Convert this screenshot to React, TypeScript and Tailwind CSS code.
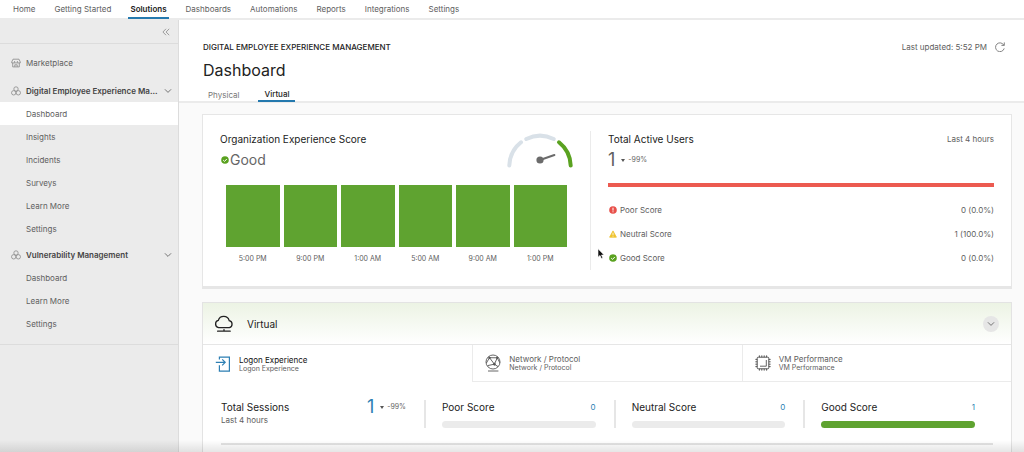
import { ReactNode } from 'react';
import clsx from 'clsx';

const NAV = ['Home', 'Getting Started', 'Solutions', 'Dashboards', 'Automations', 'Reports', 'Integrations', 'Settings'];

const DEEM_LINKS = ['Dashboard', 'Insights', 'Incidents', 'Surveys', 'Learn More', 'Settings'];
const VULN_LINKS = ['Dashboard', 'Learn More', 'Settings'];

const HOURS = ['5:00 PM', '9:00 PM', '1:00 AM', '5:00 AM', '9:00 AM', '1:00 PM'];

function Chevron({ className }: { className?: string }) {
  return (
    <svg viewBox="0 0 8 8" className={className} fill="none" stroke="#666" strokeWidth=".9" strokeLinecap="round" strokeLinejoin="round">
      <path d="M1.2 2.6 4 5.4l2.8-2.8" />
    </svg>
  );
}

function GoodIcon() {
  return (
    <svg viewBox="0 0 8 8" className="size-2 shrink-0">
      <circle cx="4" cy="4" r="3.8" fill="#5aa220" />
      <path d="m2.2 4.1 1.3 1.3 2.3-2.4" fill="none" stroke="#fff" strokeWidth="1" />
    </svg>
  );
}

function PoorIcon() {
  return (
    <svg viewBox="0 0 8 8" className="size-2 shrink-0">
      <circle cx="4" cy="4" r="3.8" fill="#e8504a" />
      <path d="M4 1.7v2.9M4 5.3v1" stroke="#fff" strokeWidth="1" />
    </svg>
  );
}

function NeutralIcon() {
  return (
    <svg viewBox="0 0 8 8" className="size-2 shrink-0">
      <path d="M4 .9 7.4 7.2H.6Z" fill="#efc32f" stroke="#efc32f" strokeWidth=".8" strokeLinejoin="round" />
      <path d="M4 2.8v2.3M4 5.7v.9" stroke="#fff" strokeWidth=".8" />
    </svg>
  );
}

function StoreIcon() {
  return (
    <svg viewBox="0 0 10 10" className="size-[10px] shrink-0" fill="none" stroke="#888" strokeWidth=".8" strokeLinejoin="round">
      <path d="M2 1.2h6L9.3 4v.9H.7V4ZM1.7 4.9v4h6.6v-4M3.8 8.8V6.8h2.4v2M3.6 3v1.7M6.4 3v1.7" />
    </svg>
  );
}

function CirclesIcon() {
  return (
    <svg viewBox="0 0 10 10" className="size-[10px] shrink-0" fill="none" stroke="#8a8a8a" strokeWidth=".8">
      <circle cx="5" cy="3" r="2.2" />
      <circle cx="2.7" cy="6.8" r="2.2" />
      <circle cx="7.3" cy="6.8" r="2.2" />
    </svg>
  );
}

function Gauge() {
  return (
    <svg viewBox="0 -1 66 37" className="h-[37px] w-[66px] shrink-0" fill="none" strokeWidth="4" strokeLinecap="round">
      <path d="M2.3 33.5A31 31 0 0 1 14 10.3" stroke="#d9e1e8" />
      <path d="M19.3 7A31 31 0 0 1 46.7 7" stroke="#d9e1e8" />
      <path d="M52 10.3A31 31 0 0 1 63.7 33.5" stroke="#5aa220" />
      <path d="M33 28 47.400 23" stroke="#6b6b6b" strokeWidth="2" />
      <circle cx="33" cy="28" r="3.6" fill="#6b6b6b" />
    </svg>
  );
}

function CloudIcon() {
  return (
    <svg viewBox="0 0 20 18" className="h-[18px] w-5 shrink-0" fill="none" stroke="#222" strokeWidth="1.3" strokeLinecap="round">
      <path d="M4.6 12.6A3.7 3.7 0 0 1 4.3 5.4 5.7 5.7 0 0 1 15.2 5.6 3.6 3.6 0 0 1 15.4 12.6ZM3.6 16.2h12.6M10 14.6v1.4" />
    </svg>
  );
}

function LogonIcon() {
  return (
    <svg viewBox="0 0 16 16" className="size-4 shrink-0" fill="none" stroke="#2d7fb3" strokeWidth="1.2">
      <path d="M4.4 3.6V1.1h10v14h-10V9.2M.8 6.3h9M7.2 3.3l3 3-3 3" />
    </svg>
  );
}

function NetworkIcon() {
  return (
    <svg viewBox="0 0 16 18" className="h-[18px] w-4 shrink-0" fill="none" stroke="#555" strokeWidth=".9">
      <circle cx="8" cy="8" r="7" />
      <path d="M4.5 3.700 9.400 10.200 12.300 3.800ZM4.500 3.700 1.400 9M12.300 3.800l2.500 5M9.400 10.200 2.600 11.600M9.400 10.200l3.600 2.400M3 17h10.400" />
      <circle cx="9.400" cy="10.200" r="1" fill="#555" />
      <circle cx="4.500" cy="3.800" r=".8" fill="#555" />
      <circle cx="12.200" cy="3.800" r=".8" fill="#555" />
    </svg>
  );
}

function ChipIcon() {
  return (
    <svg viewBox="0 0 16 16" className="size-4 shrink-0" fill="none" stroke="#555" strokeWidth="1">
      <rect x="2.2" y="2.2" width="11.6" height="11.6" rx="1" />
      <path d="M4.4 .4v1.8M6.8 .4v1.8M9.2 .4v1.8M11.6 .4v1.8M4.4 13.8v1.8M6.8 13.8v1.8M9.2 13.8v1.8M11.6 13.8v1.8M.4 4.4h1.8M.4 6.8h1.8M.4 9.2h1.8M.4 11.6h1.8M13.8 4.4h1.8M13.8 6.8h1.8M13.8 9.2h1.8M13.8 11.6h1.8" />
      <path d="M11.3 5v6.2H5" strokeWidth=".9" />
    </svg>
  );
}

function Change({ value }: { value: string }) {
  return (
    <span className="flex items-center gap-[3px] text-[7px] leading-3 text-[#666]">
      <svg viewBox="0 0 4 3" className="h-[3px] w-1" fill="#555">
        <path d="M0 0h4L2 3Z" />
      </svg>
      {value}
    </span>
  );
}

function SideLinks({ items, active }: { items: string[]; active?: string }) {
  return (
    <ul>
      {items.map((item) => (
        <li key={item}>
          <a href="#" className={clsx('flex h-[23px] items-center pl-[26px]', item === active && 'bg-white')}>
            {item}
          </a>
        </li>
      ))}
    </ul>
  );
}

function SideHeader({ label }: { label: string }) {
  return (
    <button className="flex h-[22px] w-full items-center gap-[5px] pr-[6px] pl-[11px] font-semibold text-[#444]">
      <CirclesIcon />
      <span className="flex-1 text-left whitespace-nowrap">{label}</span>
      <Chevron className="size-2 shrink-0" />
    </button>
  );
}

function ScoreRow({ icon, label, value }: { icon: ReactNode; label: string; value: string }) {
  return (
    <li className="flex items-center justify-between">
      <span className="flex items-center gap-[3px] pl-px">
        {icon}
        {label}
      </span>
      <span>{value}</span>
    </li>
  );
}

function ViewTab({ icon, label, active }: { icon: ReactNode; label: string; active?: boolean }) {
  return (
    <button
      className={clsx(
        'flex h-[37px] items-center gap-2 pl-3 text-left',
        !active && 'border-b border-l border-[#ebebeb]',
      )}
    >
      {icon}
      <span>
        <span className={clsx('block text-[8px] leading-[10px]', active && 'text-[#111]')}>{label}</span>
        <span className="block text-[7px] leading-2">{label}</span>
      </span>
    </button>
  );
}

function SessionScore({ label, value, good }: { label: string; value: number; good?: boolean }) {
  return (
    <div className="border-l-2 border-[#e6e6e6] pr-[18px] pl-4">
      <div className="flex items-center justify-between">
        <h3 className="text-[10px] leading-[14px] text-[#222]">{label}</h3>
        <a href="#" className="text-[8px] leading-[14px] text-[#2d7fb3]">{value}</a>
      </div>
      <div className={clsx('mt-[7px] h-[7px] rounded-full', good ? 'bg-[#5fa330]' : 'bg-[#ebebeb]')} />
    </div>
  );
}

export default function App() {
  return (
    <div className="relative flex h-screen flex-col overflow-hidden bg-[#fafafa] font-['Inter',sans-serif] text-[8px] leading-3 text-[#606060]">
      <nav className="flex h-5 shrink-0 gap-[15px] border-b-2 border-[#ebebeb] bg-white pl-[11px]">
        {NAV.map((item) => (
          <a
            key={item}
            href="#"
            className={clsx(
              'h-[19px] px-[2px] pt-[3px]',
              item === 'Solutions' && 'border-b-2 border-[#2479ae] font-semibold text-[#222]',
            )}
          >
            {item}
          </a>
        ))}
      </nav>

      <div className="flex min-h-0 flex-1">
        <aside className="w-[179px] shrink-0 border-r border-[#dcdcdc] bg-[#ebebeb]">
          <div className="flex h-6 items-center justify-end border-b border-[#dcdcdc] pr-2">
            <button aria-label="Collapse menu">
              <svg viewBox="0 0 8 8" className="size-2" fill="none" stroke="#888" strokeWidth=".8">
                <path d="M4 .8.9 4 4 7.2M7.2.8 4.1 4l3.1 3.2" />
              </svg>
            </button>
          </div>
          <div className="border-b border-[#dcdcdc] pt-2 pb-[9px]">
            <a href="#" className="mb-[6px] flex h-[22px] items-center gap-[5px] pl-[11px]">
              <StoreIcon />
              Marketplace
            </a>
            <SideHeader label="Digital Employee Experience Ma..." />
            <SideLinks items={DEEM_LINKS} active="Dashboard" />
            <div className="mt-1">
              <SideHeader label="Vulnerability Management" />
              <SideLinks items={VULN_LINKS} />
            </div>
          </div>
        </aside>

        <main className="min-w-0 flex-1">
          <header className="border-b-2 border-[#ebebeb] bg-white pt-[21px] pr-[19px] pl-6">
            <div className="flex items-center justify-between">
              <p className="font-medium text-[#222]">DIGITAL EMPLOYEE EXPERIENCE MANAGEMENT</p>
              <div className="flex items-center gap-2">
                <span>Last updated: 5:52 PM</span>
                <button aria-label="Refresh">
                  <svg viewBox="0 0 10 10" className="size-[10px]" fill="none" stroke="#777" strokeWidth=".9">
                    <path d="M8.9 3.3A4.4 4.4 0 1 0 9.2 6.4M9.3.4v3H6.4" />
                  </svg>
                </button>
              </div>
            </div>
            <h1 className="mt-[5px] text-base leading-6 text-[#222]">Dashboard</h1>
            <div className="mt-[6px] flex gap-[14px]">
              <button className="h-[13px] px-[5px] text-[#777]">Physical</button>
              <button className="-mb-px h-[14px] border-b-2 border-[#2479ae] px-[6px] font-medium text-[#222]">Virtual</button>
            </div>
          </header>

          <div className="flex flex-col gap-[13px] pt-[11px] pr-3 pl-[23px]">
            <section className="flex border border-b-3 border-[#e6e6e6] bg-white pt-4 pb-4">
              <div className="w-[388px] shrink-0 border-r border-[#ebebeb] px-[17px] pb-[5px]">
                <div className="flex justify-between">
                  <div>
                    <h2 className="text-[10px] leading-4 text-[#222]">Organization Experience Score</h2>
                    <p className="mt-[5px] flex items-center gap-px pl-px text-[14px] leading-4 text-[#666]">
                      <GoodIcon />
                      Good
                    </p>
                  </div>
                  <Gauge />
                </div>
                <ul className="mt-[17px] flex gap-1 px-[6px]">
                  {HOURS.map((hour) => (
                    <li key={hour} className="flex-1 text-center text-[7px] leading-3">
                      <div className="mb-[6px] h-[62px] bg-[#5fa330]" />
                      {hour}
                    </li>
                  ))}
                </ul>
              </div>
              <div className="min-w-0 flex-1 px-[17px]">
                <div className="flex items-center justify-between">
                  <h2 className="text-[10px] leading-4 text-[#222]">Total Active Users</h2>
                  <span>Last 4 hours</span>
                </div>
                <p className="mt-[3px] flex items-center gap-[6px] text-lg leading-5">
                  1
                  <Change value="-99%" />
                </p>
                <div className="mt-[13px] h-1 bg-[#ec5a50]" />
                <ul className="mt-[17px] flex flex-col gap-3">
                  <ScoreRow icon={<PoorIcon />} label="Poor Score" value="0 (0.0%)" />
                  <ScoreRow icon={<NeutralIcon />} label="Neutral Score" value="1 (100.0%)" />
                  <ScoreRow icon={<GoodIcon />} label="Good Score" value="0 (0.0%)" />
                </ul>
              </div>
            </section>

            <section className="border border-[#e3e3e3] bg-white">
              <div className="flex h-[42px] items-center border-b border-[#e6e6e6] bg-linear-to-b from-[#ecf3e4] to-white pr-3 pl-[11px]">
                <CloudIcon />
                <h2 className="ml-[13px] flex-1 text-[10px] leading-4 text-[#222]">Virtual</h2>
                <button aria-label="Collapse" className="flex size-4 items-center justify-center rounded-full bg-[#e6e6e6]">
                  <Chevron className="size-2" />
                </button>
              </div>
              <div className="grid grid-cols-3">
                <ViewTab icon={<LogonIcon />} label="Logon Experience" active />
                <ViewTab icon={<NetworkIcon />} label="Network / Protocol" />
                <ViewTab icon={<ChipIcon />} label="VM Performance" />
              </div>
              <div className="mx-[18px] grid grid-cols-[203px_1fr_1fr_1fr] border-b-2 border-[#e3e3e3] pt-[18px] pb-[15px]">
                <div className="flex justify-between pr-[18px]">
                  <div>
                    <h3 className="text-[10px] leading-[14px] text-[#222]">Total Sessions</h3>
                    <p>Last 4 hours</p>
                  </div>
                  <div className="flex h-[14px] items-center gap-[6px]">
                    <a href="#" className="text-lg leading-[14px] text-[#2d7fb3]">1</a>
                    <Change value="-99%" />
                  </div>
                </div>
                <SessionScore label="Poor Score" value={0} />
                <SessionScore label="Neutral Score" value={0} />
                <SessionScore label="Good Score" value={1} good />
              </div>
              <div className="h-10" />
            </section>
          </div>
        </main>
      </div>

      <svg viewBox="0 0 8 12" className="absolute top-[248px] left-[597px] h-3 w-2">
        <path d="M1 .8v8.4l2-1.8 1.4 3.2 1.4-.6L4.5 7h2.6Z" fill="#111" stroke="#fff" strokeWidth=".6" />
      </svg>
      <div className="pointer-events-none absolute inset-x-0 bottom-0 h-3 bg-linear-to-b from-transparent to-black/10" />
    </div>
  );
}
